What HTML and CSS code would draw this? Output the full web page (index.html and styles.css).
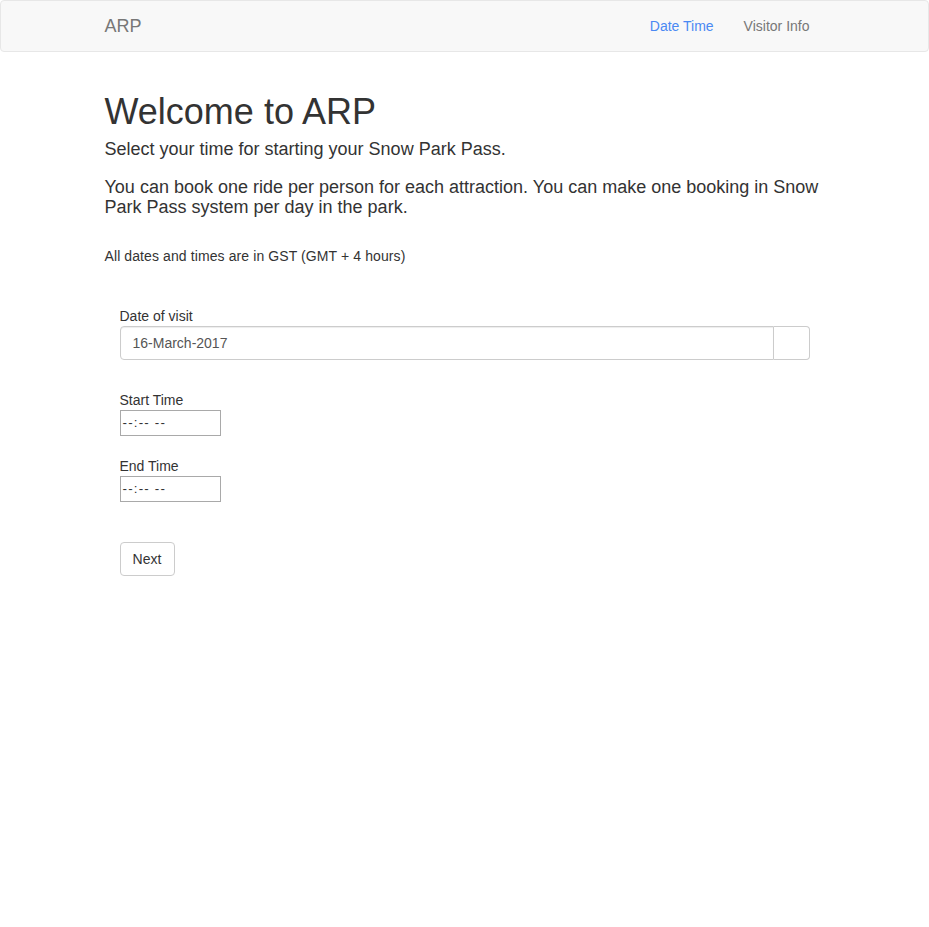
FILE: index.html
```html
<!DOCTYPE html>
<html>
<head>
<meta charset="utf-8">
<title>ARP</title>
<link rel="stylesheet" href="styles.css">
</head>
<body>
<nav class="navbar">
  <div class="container nav-inner">
    <a class="brand" href="#">ARP</a>
    <ul class="nav-links">
      <li><a class="active" href="#">Date Time</a></li>
      <li><a href="#">Visitor Info</a></li>
    </ul>
  </div>
</nav>
<main class="container">
  <h1 class="title">Welcome to ARP</h1>
  <p class="lead">Select your time for starting your Snow Park Pass.</p>
  <p class="lead second">You can book one ride per person for each attraction. You can make one booking in Snow Park Pass system per day in the park.</p>
  <p class="note">All dates and times are in GST (GMT + 4 hours)</p>
  <form class="form">
    <div class="group date-group">
      <label class="label">Date of visit</label>
      <div class="input-group">
        <div class="date-input">16-March-2017</div>
        <span class="addon"></span>
      </div>
    </div>
    <div class="group time-group">
      <label class="label">Start Time</label>
      <div class="time-input">--:-- --</div>
    </div>
    <div class="group time-group second-time">
      <label class="label">End Time</label>
      <div class="time-input">--:-- --</div>
    </div>
    <button type="button" class="btn">Next</button>
  </form>
</main>
</body>
</html>
```
FILE: styles.css
```css
* { box-sizing: border-box; }
html, body { margin: 0; padding: 0; }
body {
  font-family: "Liberation Sans", Arial, sans-serif;
  font-size: 14px;
  line-height: 20px;
  color: #333;
  background: #fff;
}
.container {
  width: 750px;
  margin: 0 auto;
  padding: 0 15px;
}
.navbar {
  height: 52px;
  background: #f8f8f8;
  border: 1px solid #e7e7e7;
  border-radius: 4px;
}
.nav-inner {
  display: flex;
  justify-content: space-between;
  align-items: stretch;
  height: 50px;
}
.brand {
  font-size: 18px;
  line-height: 20px;
  padding: 15px 0;
  color: #777;
  text-decoration: none;
}
.nav-links {
  list-style: none;
  margin: 0;
  padding: 0;
  display: flex;
}
.nav-links a {
  display: block;
  padding: 15px;
  line-height: 20px;
  font-size: 14px;
  color: #777;
  text-decoration: none;
}
.nav-links a.active { color: #4a89f3; }
.title {
  font-size: 36px;
  font-weight: 500;
  line-height: 1.1;
  margin: 40px 0 0;
}
.lead {
  font-size: 18px;
  line-height: 1.1;
  margin: 8px 0 0;
}
.lead.second { margin-top: 18.5px; }
.note {
  font-size: 14px;
  line-height: 20px;
  margin: 28.5px 0 0;
  letter-spacing: 0.1px;
}
.form {
  padding: 0 15px;
  margin-top: 40px;
}
.label {
  display: block;
  font-weight: normal;
  line-height: 20px;
}
.input-group {
  display: flex;
  height: 34px;
}
.date-input {
  flex: 1;
  height: 34px;
  padding: 6px 12px;
  font-size: 14px;
  line-height: 20px;
  color: #555;
  border: 1px solid #ccc;
  border-radius: 4px 0 0 4px;
  box-shadow: inset 0 1px 1px rgba(0,0,0,.075);
}
.addon {
  width: 36px;
  border: 1px solid #ccc;
  border-left: 0;
  border-radius: 0 4px 4px 0;
  background: #fff;
}
.time-group { margin-top: 30px; }
.time-group.second-time { margin-top: 20px; }
.time-input {
  width: 101px;
  height: 26px;
  border: 1px solid #a9a9a9;
  padding: 0 2px;
  font-size: 13.33px;
  line-height: 24px;
  letter-spacing: 1.2px;
  color: #333;
  background: #fff;
}
.btn {
  display: block;
  margin-top: 40px;
  height: 34px;
  width: 55px;
  padding: 6px 12px;
  font-family: "Liberation Sans", Arial, sans-serif;
  font-size: 14px;
  line-height: 20px;
  color: #333;
  background: #fff;
  border: 1px solid #ccc;
  border-radius: 4px;
}
```
